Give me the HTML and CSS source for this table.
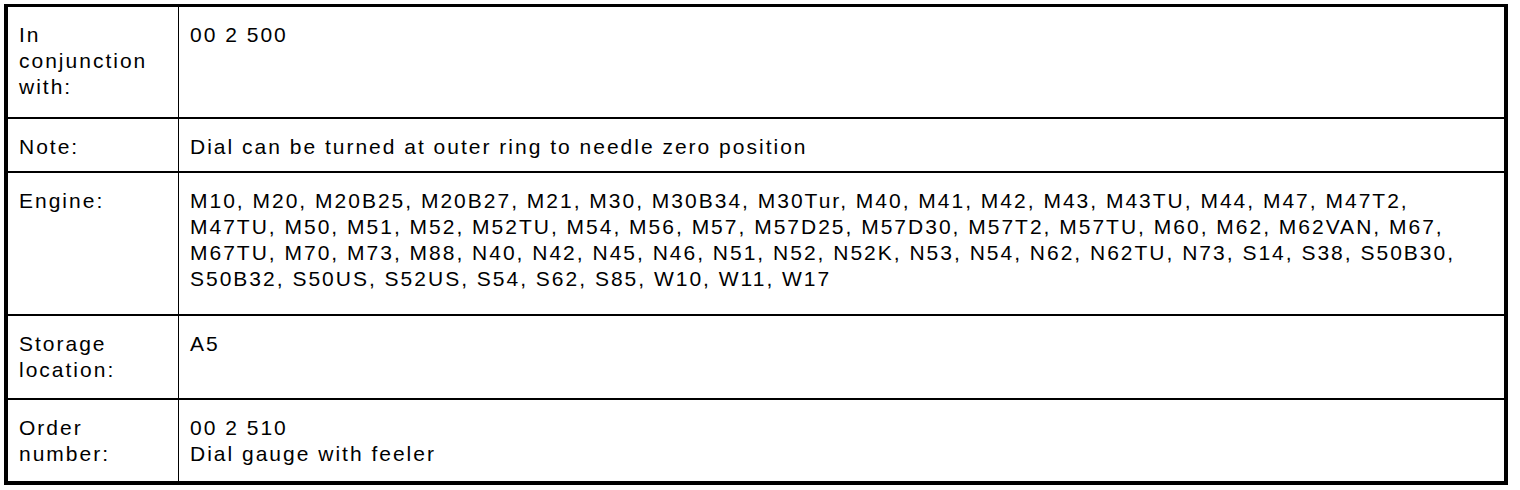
FILE: index.html
```html
<!DOCTYPE html>
<html lang="en">
<head>
<meta charset="utf-8">
<title>Special tool</title>
<link rel="stylesheet" href="styles.css">
</head>
<body>
<table class="info">
  <colgroup>
    <col class="col-label">
    <col class="col-value">
  </colgroup>
  <tr class="r1">
    <th>In conjunction with:</th>
    <td>00 2 500</td>
  </tr>
  <tr class="r2">
    <th>Note:</th>
    <td>Dial can be turned at outer ring to needle zero position</td>
  </tr>
  <tr class="r3">
    <th>Engine:</th>
    <td>M10, M20, M20B25, M20B27, M21, M30, M30B34, M30Tur, M40, M41, M42, M43, M43TU, M44, M47, M47T2, M47TU, M50, M51, M52, M52TU, M54, M56, M57, M57D25, M57D30, M57T2, M57TU, M60, M62, M62VAN, M67, M67TU, M70, M73, M88, N40, N42, N45, N46, N51, N52, N52K, N53, N54, N62, N62TU, N73, S14, S38, S50B30, S50B32, S50US, S52US, S54, S62, S85, W10, W11, W17</td>
  </tr>
  <tr class="r4">
    <th>Storage location:</th>
    <td>A5</td>
  </tr>
  <tr class="r5 last">
    <th>Order number:</th>
    <td>00 2 510<br>Dial gauge with feeler</td>
  </tr>
</table>
</body>
</html>
```

FILE: styles.css
```css
html, body {
  margin: 0;
  padding: 0;
  background: #fff;
}
body {
  padding: 4px;
  font-family: "Liberation Sans", Arial, sans-serif;
  font-size: 21px;
  line-height: 26px;
  letter-spacing: 2px;
  color: #000;
}
.info {
  width: 1504px;
  table-layout: fixed;
  border-collapse: separate;
  border-spacing: 0;
  border: 4px solid #000;
  border-top-width: 3px;
  box-sizing: border-box;
}
.col-label {
  width: 171px;
}
.info th,
.info td {
  box-sizing: border-box;
  vertical-align: top;
  text-align: left;
  font-weight: normal;
  padding: 15px 8px 0 11px;
  border-bottom: 2px solid #000;
}
.info th {
  width: 171px;
  padding-left: 11px;
  padding-right: 25px;
  border-right: 1px solid #000;
}
.info .last th,
.info .last td {
  border-bottom: none;
}
.r1 { height: 112px; }
.r2 { height: 54px; }
.r3 { height: 143px; }
.r4 { height: 84px; }
.r5 { height: 81px; }
```
